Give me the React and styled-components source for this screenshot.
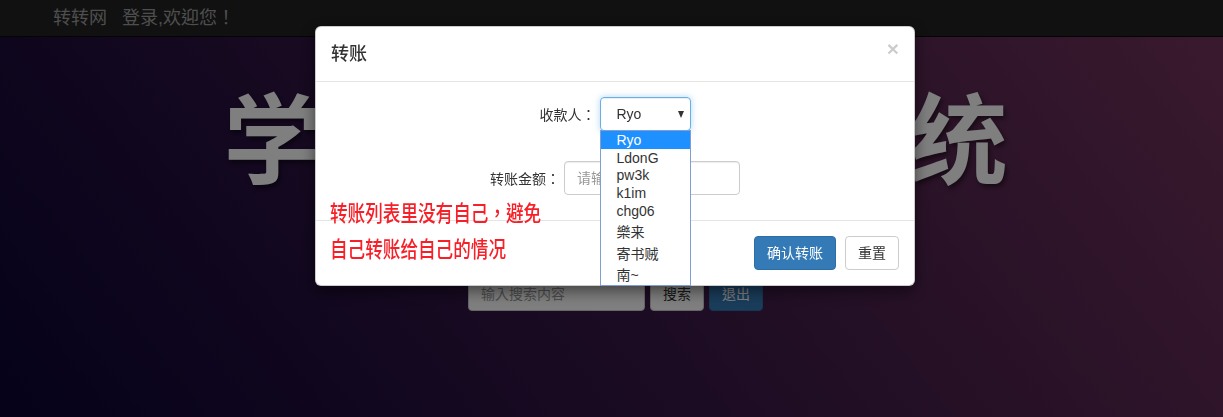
import React from "react";
import styled, { createGlobalStyle } from "styled-components";

const GlobalStyle = createGlobalStyle`
    html, body {
        margin: 0;
        padding: 0;
        height: 100%;
    }
    body {
        font-family: "Liberation Sans", "Noto Sans CJK TC", "Noto Sans CJK SC", sans-serif;
        font-size: 14px;
        color: #333;
        overflow: hidden;
    }
    * {
        box-sizing: border-box;
    }
`;

const Page = styled.div`
    height: 100vh;
    background: linear-gradient(52deg, #0a0434 0%, #3c1a48 50%, #76345c 100%);
`;

const NavBar = styled.div`
    display: flex;
    align-items: center;
    gap: 15px;
    height: 37px;
    padding: 0 0 5px 53px;
    background: #222;
    border-bottom: 1px solid #080808;
`;

const NavText = styled.span`
    font-size: 18px;
    color: #9d9d9d;
`;

const Main = styled.div`
    display: flex;
    flex-direction: column;
    align-items: center;
    padding-left: 8px;
`;

const Headline = styled.h1`
    margin: 47px 0 0;
    font-family: "Noto Sans CJK SC", sans-serif;
    font-size: 98px;
    line-height: 98px;
    font-weight: 700;
    color: #fff;
    text-shadow: 2px 3px 5px rgba(0, 0, 0, 0.5);
`;

const SearchRow = styled.div`
    display: flex;
    gap: 5px;
    margin-top: 95px;
`;

const SearchInput = styled.input`
    width: 177px;
    height: 34px;
    padding: 6px 12px;
    border: 1px solid #ccc;
    border-radius: 4px;
    font: inherit;
    &::placeholder {
        color: #999;
    }
`;

const Button = styled.button`
    height: 34px;
    padding: 6px 12px;
    font: inherit;
    line-height: 20px;
    border-radius: 4px;
    border: 1px solid ${(p) => (p.$primary ? "#2e6da4" : "#ccc")};
    background: ${(p) => (p.$primary ? "#337ab7" : "#fff")};
    color: ${(p) => (p.$primary ? "#fff" : "#333")};
`;

const Backdrop = styled.div`
    position: fixed;
    inset: 0;
    background: #000;
    opacity: 0.5;
`;

const ModalLayer = styled.div`
    position: fixed;
    inset: 0;
    padding-left: 7px;
`;

const ModalContent = styled.div`
    position: relative;
    width: 600px;
    margin: 26px auto 0;
    background: #fff;
    border: 1px solid rgba(0, 0, 0, 0.2);
    border-radius: 6px;
    box-shadow: 0 5px 15px rgba(0, 0, 0, 0.5);
`;

const ModalHeader = styled.div`
    display: flex;
    justify-content: space-between;
    padding: 15px;
    border-bottom: 1px solid #e5e5e5;
`;

const ModalTitle = styled.h4`
    margin: 0;
    font-size: 18px;
    font-weight: 500;
    line-height: 24px;
`;

const CloseButton = styled.span`
    margin-top: -4px;
    font-size: 21px;
    font-weight: 700;
    line-height: 1;
    color: #000;
    opacity: 0.2;
`;

const ModalBody = styled.div`
    display: flex;
    flex-direction: column;
    gap: 30px;
    padding: 15px 15px 25px;
`;

const FormRow = styled.div`
    display: flex;
    justify-content: center;
    align-items: center;
    gap: 4px;
`;

const FieldLabel = styled.label`
    font-size: 14px;
`;

const SelectBox = styled.div`
    position: relative;
    width: 91px;
    height: 34px;
    padding: 0 0 0 16px;
    border: 1px solid #66afe9;
    border-radius: 4px;
    box-shadow: inset 0 1px 1px rgba(0, 0, 0, 0.075), 0 0 6px rgba(102, 175, 233, 0.5);
    line-height: 32px;
    font-size: 14px;
`;

const Caret = styled.span`
    position: absolute;
    right: 6px;
    top: 13px;
    border-left: 3.5px solid transparent;
    border-right: 3.5px solid transparent;
    border-top: 7px solid #333;
`;

const OptionList = styled.ul`
    position: absolute;
    top: 32px;
    left: -1px;
    width: 91px;
    margin: 0;
    padding: 0;
    list-style: none;
    background: #fff;
    border: 1px solid #7f9ed6;
    z-index: 2;
`;

const Option = styled.li`
    padding: 0.9px 0 0.9px 16px;
    line-height: normal;
    font-size: 14px;
    color: ${(p) => (p.$active ? "#fff" : "#333")};
    background: ${(p) => (p.$active ? "#1e90ff" : "transparent")};
`;

const TextInput = styled.input`
    width: 176px;
    height: 34px;
    padding: 6px 12px;
    border: 1px solid #ccc;
    border-radius: 4px;
    font: inherit;
    box-shadow: inset 0 1px 1px rgba(0, 0, 0, 0.075);
    &::placeholder {
        color: #999;
    }
`;

const ModalFooter = styled.div`
    display: flex;
    justify-content: flex-end;
    gap: 9px;
    padding: 15px;
    border-top: 1px solid #e5e5e5;
`;

const Annotation = styled.div`
    position: absolute;
    left: 14px;
    top: 166px;
    font-family: "Noto Sans CJK TC", "Noto Sans CJK SC", sans-serif;
    font-size: 22px;
    font-weight: 500;
    line-height: 36px;
    color: #f72028;
    transform: scaleX(0.8);
    transform-origin: left top;
    white-space: nowrap;
    pointer-events: none;
`;

const payees = ["Ryo", "LdonG", "pw3k", "k1im", "chg06", "樂来", "寄书贼", "南~"];

export default function App() {
    return (
        <>
            <GlobalStyle />
            <Page>
                <NavBar>
                    <NavText>转转网</NavText>
                    <NavText>登录,欢迎您！</NavText>
                </NavBar>
                <Main>
                    <Headline>学生信息管理系统</Headline>
                    <SearchRow>
                        <SearchInput placeholder="输入搜索内容" />
                        <Button>搜索</Button>
                        <Button $primary>退出</Button>
                    </SearchRow>
                </Main>
            </Page>
            <Backdrop />
            <ModalLayer>
                <ModalContent>
                    <ModalHeader>
                        <ModalTitle>转账</ModalTitle>
                        <CloseButton>×</CloseButton>
                    </ModalHeader>
                    <ModalBody>
                        <FormRow>
                            <FieldLabel>收款人：</FieldLabel>
                            <SelectBox>
                                Ryo
                                <Caret />
                                <OptionList>
                                    {payees.map((name, index) => (
                                        <Option key={name} $active={index === 0}>
                                            {name}
                                        </Option>
                                    ))}
                                </OptionList>
                            </SelectBox>
                        </FormRow>
                        <FormRow>
                            <FieldLabel>转账金额：</FieldLabel>
                            <TextInput placeholder="请输入转账金额" />
                        </FormRow>
                    </ModalBody>
                    <ModalFooter>
                        <Button $primary>确认转账</Button>
                        <Button>重置</Button>
                    </ModalFooter>
                    <Annotation>
                        转账列表里没有自己，避免
                        <br />
                        自己转账给自己的情况
                    </Annotation>
                </ModalContent>
            </ModalLayer>
        </>
    );
}
